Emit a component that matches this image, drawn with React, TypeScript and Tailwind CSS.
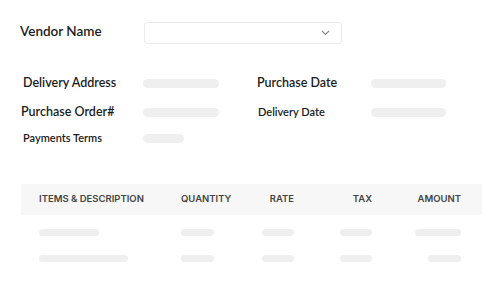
import React from "react";

const Pill = ({ w, h = "h-[9px]" }: { w: string; h?: string }) => (
  <div className={`${w} ${h} rounded-full bg-[#efefef]`} />
);

export default function App() {
  return (
    <div className="w-[500px] h-[300px] bg-white font-['Lato',sans-serif] text-[#1c1c1c]">
      {/* vendor */}
      <div className="flex items-center pt-[22px] pl-[20px]">
        <div className="w-[124px] -mt-[3px] text-[13.5px] font-semibold">Vendor Name</div>
        <div className="flex h-[22px] w-[198px] items-center justify-end rounded-[3px] border border-[#ebebeb] pr-[11px]">
          <svg width="9" height="6" viewBox="0 0 9 6" fill="none">
            <path d="M1 1l3.5 3.5L8 1" stroke="#8a8a8a" strokeWidth="1.2" />
          </svg>
        </div>
      </div>

      {/* details */}
      <div className="mt-[27px] flex flex-col">
        <div className="flex h-6 items-center">
          <div className="ml-[23px] w-[120px] text-[12.5px] font-semibold">Delivery Address</div>
          <Pill w="w-[76px]" />
          <div className="ml-[38px] w-[114px] text-[12.5px] font-semibold">Purchase Date</div>
          <Pill w="w-[75px]" />
        </div>
        <div className="mt-[5px] flex h-6 items-center">
          <div className="ml-[21px] w-[122px] text-[12.5px] font-semibold">Purchase Order#</div>
          <Pill w="w-[76px]" />
          <div className="ml-[39px] w-[113px] text-[11px] font-semibold">Delivery Date</div>
          <Pill w="w-[75px]" />
        </div>
        <div className="mt-[2px] flex h-6 items-center">
          <div className="ml-[23px] w-[120px] text-[11px] font-semibold">Payments Terms</div>
          <Pill w="w-[41px]" />
        </div>
      </div>

      {/* table */}
      <div className="mx-[21px] mt-[34px] w-[461px]">
        <div className="grid h-[31px] grid-cols-[142px_60px_53px_78px_89px] items-center bg-[#f7f7f7] pl-[18px] font-['Inter',sans-serif] text-[9.5px] font-semibold text-[#444]">
          <div>ITEMS &amp; DESCRIPTION</div>
          <div>QUANTITY</div>
          <div className="text-right">RATE</div>
          <div className="text-right">TAX</div>
          <div className="text-right">AMOUNT</div>
        </div>
        <div className="mt-[14px] grid grid-cols-[142px_60px_53px_78px_89px] pl-[18px]">
          <Pill w="w-[60px]" h="h-[7px]" />
          <Pill w="w-[33px]" h="h-[7px]" />
          <div className="flex justify-end"><Pill w="w-[32px]" h="h-[7px]" /></div>
          <div className="flex justify-end"><Pill w="w-[32px]" h="h-[7px]" /></div>
          <div className="flex justify-end"><Pill w="w-[46px]" h="h-[7px]" /></div>
        </div>
        <div className="mt-[19px] grid grid-cols-[142px_60px_53px_78px_89px] pl-[18px]">
          <Pill w="w-[89px]" h="h-[7px]" />
          <Pill w="w-[33px]" h="h-[7px]" />
          <div className="flex justify-end"><Pill w="w-[32px]" h="h-[7px]" /></div>
          <div className="flex justify-end"><Pill w="w-[32px]" h="h-[7px]" /></div>
          <div className="flex justify-end"><Pill w="w-[33px]" h="h-[7px]" /></div>
        </div>
      </div>
    </div>
  );
}
